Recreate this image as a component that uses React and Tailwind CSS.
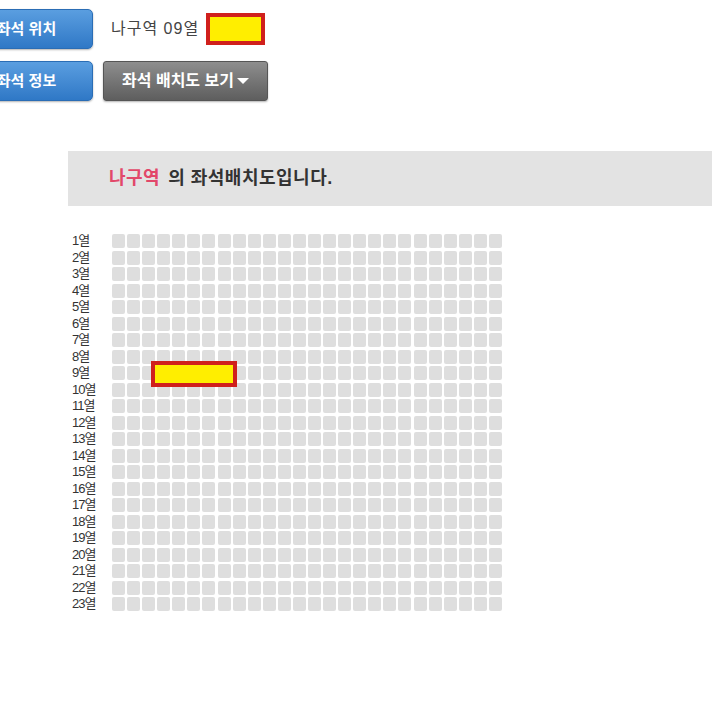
import React from 'react';

const ROWS = 23;
const COLS = 26;

const SeatMap = () => {
  return (
    <div className="min-h-screen w-[712px] bg-white font-['Liberation_Sans','Noto_Sans_CJK_KR',sans-serif] text-[#333] overflow-hidden">
      <div className="flex flex-col gap-[12px] pt-[9px]">
        <div className="flex items-center">
          <button className="-ml-[40px] w-[133px] h-[40px] rounded-[5px] bg-gradient-to-b from-[#5a9ee0] to-[#2f78c6] border border-[#2a6db5] text-white font-bold text-[15px] shadow-[0_1px_2px_rgba(0,0,0,0.3)]">
            좌석 위치
          </button>
          <span className="ml-[18px] text-[16px] tracking-[1px] text-[#444]">나구역 09열</span>
          <div className="ml-[7px] w-[59px] h-[32px] border-[4px] border-[#d0201c] bg-[#ffee00]"></div>
        </div>
        <div className="flex items-center">
          <button className="-ml-[40px] w-[133px] h-[40px] rounded-[5px] bg-gradient-to-b from-[#5a9ee0] to-[#2f78c6] border border-[#2a6db5] text-white font-bold text-[15px] shadow-[0_1px_2px_rgba(0,0,0,0.3)]">
            좌석 정보
          </button>
          <button className="ml-[10px] w-[165px] h-[40px] rounded-[3px] bg-gradient-to-b from-[#8e8e8e] to-[#5e5e5e] border border-[#555] text-white font-bold text-[16px] flex items-center justify-center gap-[3px] shadow-[0_1px_2px_rgba(0,0,0,0.3)]">
            좌석 배치도 보기
            <svg width="12" height="8" viewBox="0 0 12 8">
              <path d="M0 1 L12 1 L6 7 Z" fill="#fff" />
            </svg>
          </button>
        </div>
      </div>

      <div className="mt-[50px] ml-[68px] h-[55px] bg-[#e3e3e3] flex items-center pl-[41px] text-[18px] tracking-[0.5px] font-bold">
        <span className="text-[#e2486a]">나구역</span>
        <span className="ml-[8px] text-[#333]">의 좌석배치도입니다.</span>
      </div>

      <div className="mt-[28px] ml-[72px] flex">
        <div className="flex flex-col gap-y-[2.5px] w-[40px]">
          {Array.from({ length: ROWS }, (_, r) => (
            <div key={r} className="h-[14px] text-[13px] leading-[14px] tracking-[-1px] text-[#333]">
              {r + 1}열
            </div>
          ))}
        </div>
        <div className="relative flex flex-col gap-y-[2.5px]">
          {Array.from({ length: ROWS }, (_, r) => (
            <div key={r} className="flex gap-[2.08px]">
              {Array.from({ length: COLS }, (_, c) => (
                <div key={c} className="w-[13px] h-[14px] rounded-[2px] bg-[#dedede]"></div>
              ))}
            </div>
          ))}
          <div className="absolute left-[39px] top-[127px] w-[86px] h-[26px] border-[4px] border-[#d0201c] bg-[#ffee00]"></div>
        </div>
      </div>
    </div>
  );
};

export default SeatMap;
